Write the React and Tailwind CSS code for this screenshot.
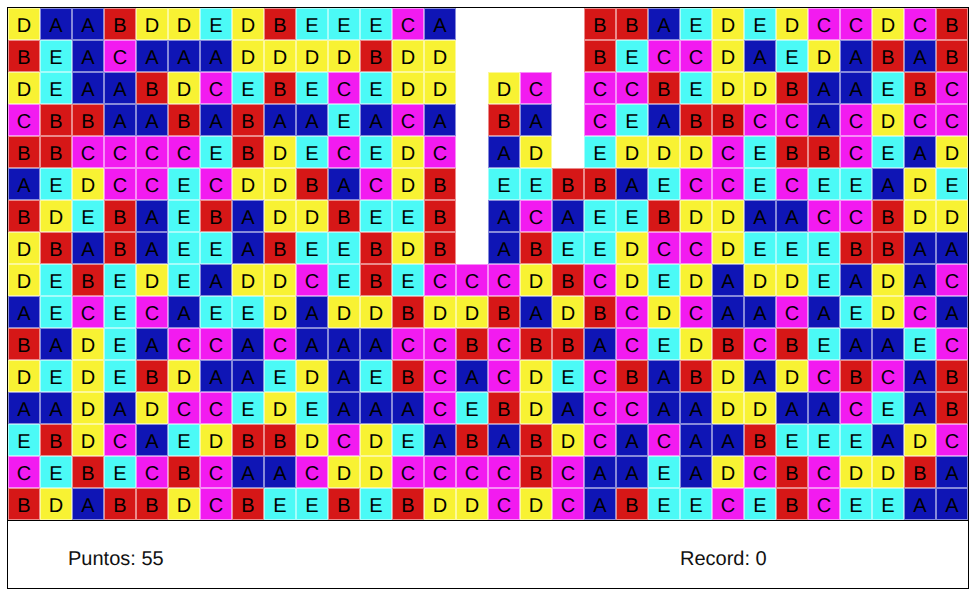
import React from "react";

const rows = [
  "DAABDDEDBEEECA____BBAEDEDCCDCB",
  "BEACAAADDDDBDD____BECCDAEDABAB",
  "DEAABDCEBECEDD_DC_CCBEDDBAAEBC",
  "CBBAABABAAEACA_BA_CEABBCCACDCC",
  "BBCCCCEBDECEDC_AD_EDDDCEBBCEAD",
  "AEDCCECDDBACDB_EEBBAECCECEEADE",
  "BDEBAEBADDBEEB_ACAEEBDDAACCBDD",
  "DBABAEEABEEBDB_ABEEDCCDEEEBBAA",
  "DEBEDEADDCEBECCCDBCDEDADDEADAC",
  "AECECAEEDADDBDDBADBCDCAACAEDCA",
  "BADEACCACAAACCBCBBACEDBCBEAAEC",
  "DEDEBDAAEDAEBCACDECBABDADCBCAB",
  "AADADCCEDEAAACEBDACCAADDAACEAB",
  "EBDCAEDBBDCDEABABDCACAABEEEADC",
  "CEBECBCAACDDCCCCBCAAEADCBCDDBA",
  "BDABBDCBEEBEBDDCDCABEECEBCEEAA",
];

const colors = {
  A: "bg-[#0f15b5]",
  B: "bg-[#d61717]",
  C: "bg-[#f21bf0]",
  D: "bg-[#f8f233]",
  E: "bg-[#4bfaf6]",
};

function Cell({ letter }) {
  if (letter === "_") return <div className="w-8 h-8" />;
  return (
    <div
      className={`w-8 h-8 pt-1 flex items-center justify-center border border-white/50 text-xl text-black ${colors[letter]}`}
    >
      {letter}
    </div>
  );
}

function App() {
  return (
    <div className="m-[7px] w-[962px] border border-black bg-white font-['Liberation_Sans',Arial,sans-serif] [text-rendering:geometricPrecision]">
      <div className="grid grid-cols-[repeat(30,32px)] auto-rows-[32px]">
        {rows.map((row, r) =>
          row.split("").map((letter, c) => <Cell key={r + "-" + c} letter={letter} />)
        )}
      </div>

      {/* Marcador */}
      <div className="h-[68px] pt-2 border-t border-black flex items-center text-xl text-[#111]">
        <div className="w-[672px] pl-[60px]">Puntos: 55</div>
        <div>Record: 0</div>
      </div>
    </div>
  );
}

export default App;
